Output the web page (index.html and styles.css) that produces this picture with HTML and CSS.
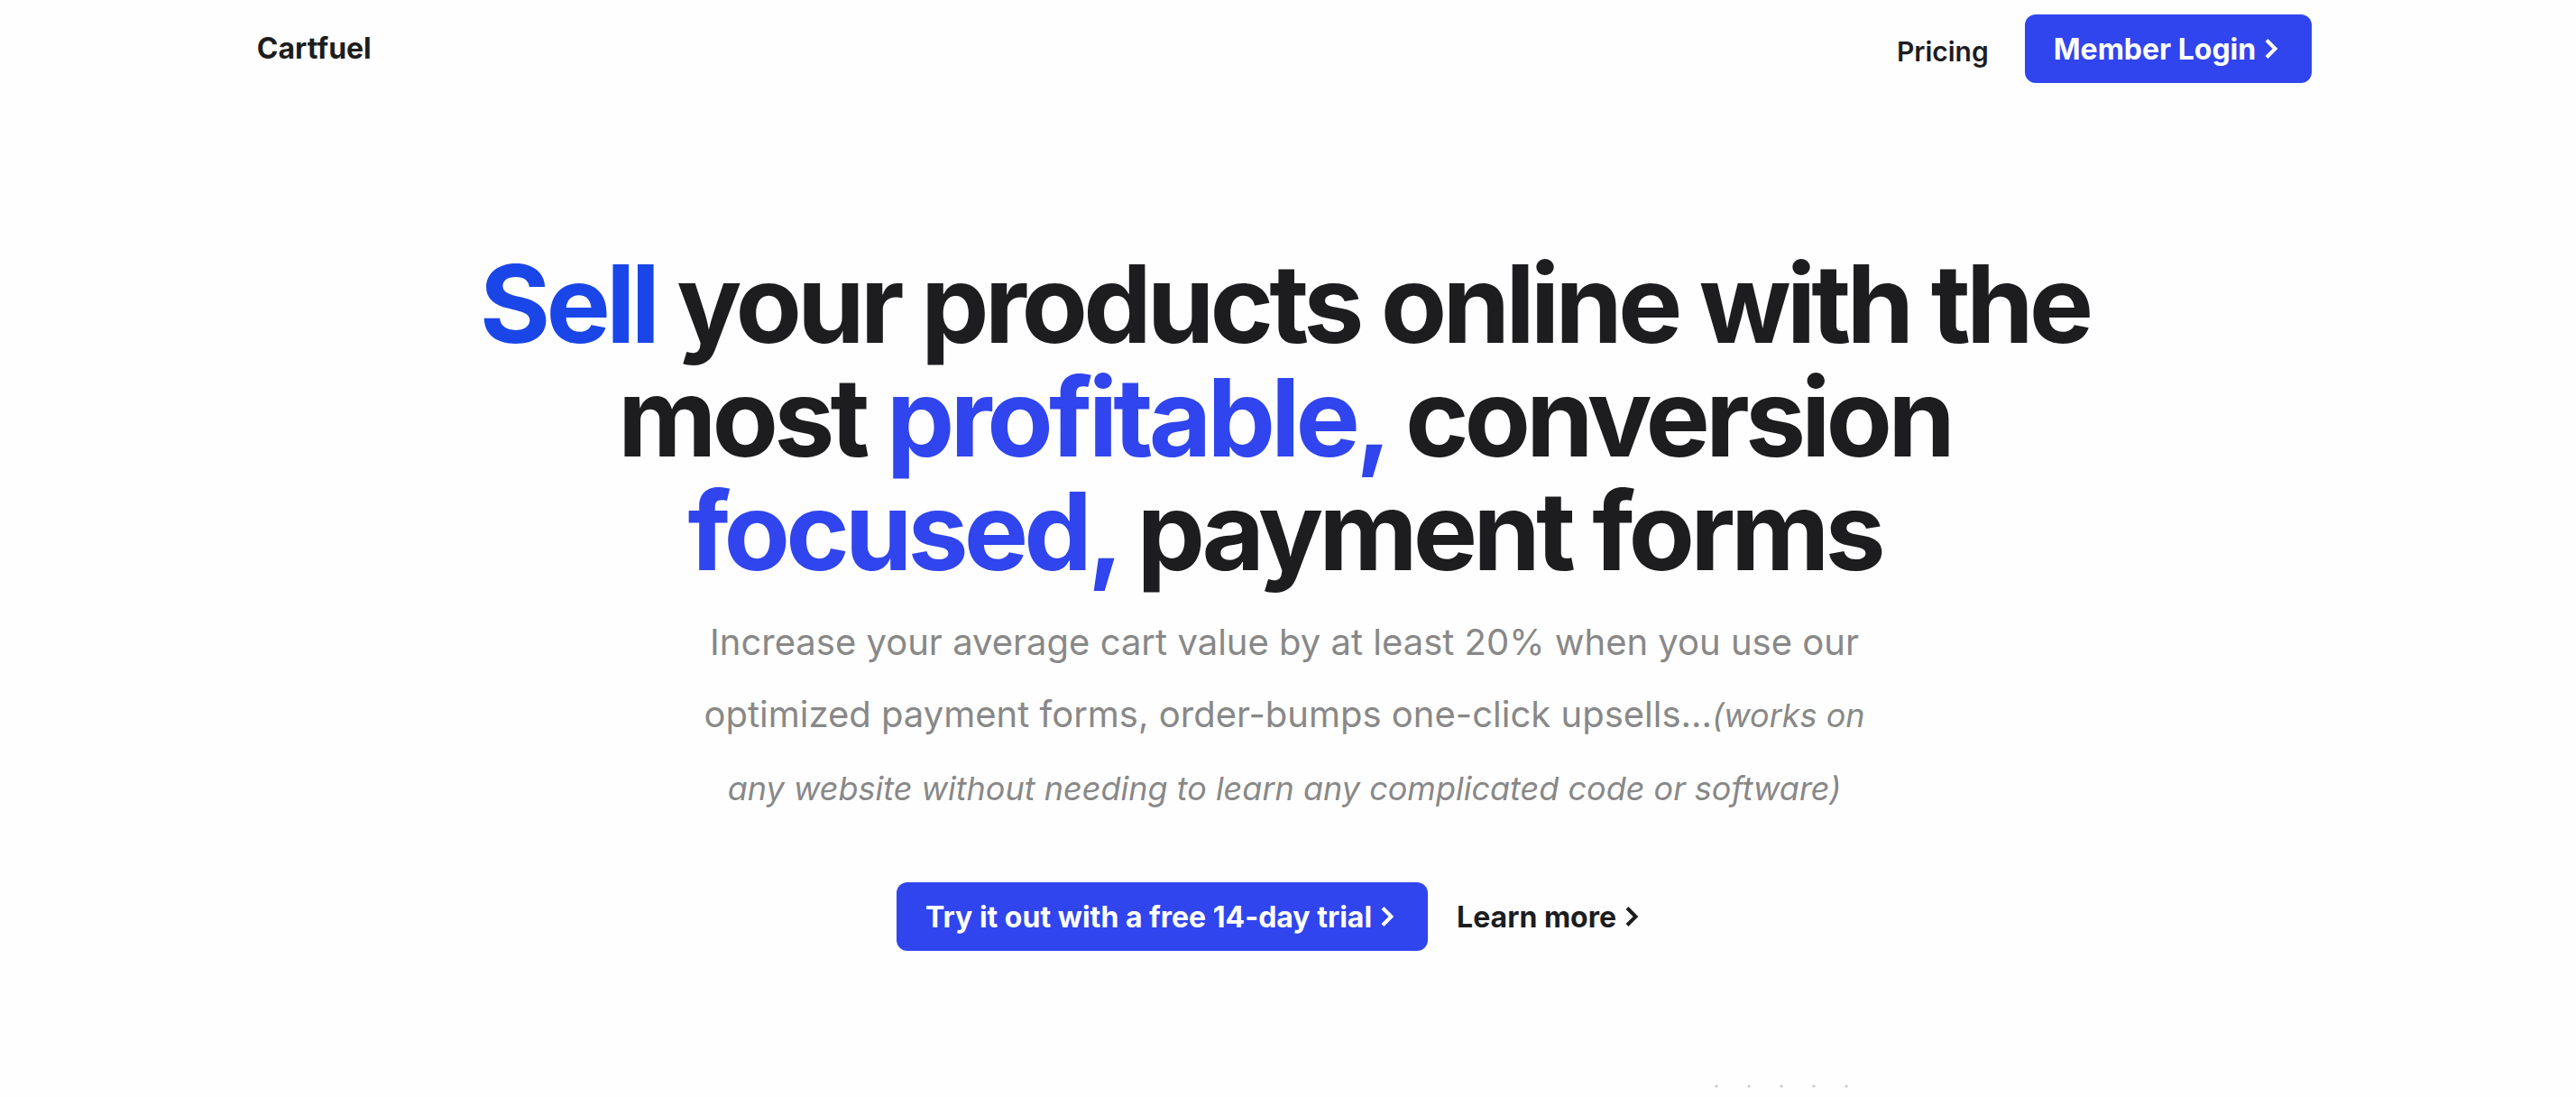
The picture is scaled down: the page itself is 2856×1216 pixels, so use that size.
FILE: index.html
```html
<!DOCTYPE html>
<html lang="en">
<head>
<meta charset="utf-8">
<meta name="viewport" content="width=device-width, initial-scale=1">
<title>Cartfuel</title>
<link rel="stylesheet" href="styles.css">
</head>

<body>
<header class="navbar">
  <a class="brand" href="#">Cartfuel</a>
  <nav class="nav-links">
    <a class="nav-link" href="#pricing">Pricing</a>
    <a class="btn" href="#login">Member Login
      <svg class="arrow" viewBox="0 0 16 24"><path d="M2 2.500l9.500 9.500-9.500 9.500"/></svg>
    </a>
  </nav>
</header>

<main>
  <section class="hero">
    <h1><span class="sell">Sell</span> your products online with the most <span class="blue">profitable,</span> conversion <span class="blue">focused,</span> payment forms</h1>
    <p class="lead">Increase your average cart value by at least 20% when you use our optimized payment forms, order-bumps one-click upsells...<em>(works on any website without needing to learn any complicated code or software)</em></p>
    <div class="actions">
      <a class="btn" href="#trial">Try it out with a free 14-day trial
        <svg class="arrow" viewBox="0 0 16 24"><path d="M2 2.500l9.500 9.500-9.500 9.500"/></svg>
      </a>
      <a class="more" href="#more">Learn more
        <svg class="arrow" viewBox="0 0 16 24"><path d="M2 2.500l9.500 9.500-9.500 9.500"/></svg>
      </a>
    </div>
  </section>

  <section class="preview">
    <div class="dots"></div>
  </section>
</main>
</body>
</html>
```
FILE: styles.css
```css
* {
  box-sizing: border-box;
}

body {
  margin: 0;
  padding-right: 8px;
  background: #fefefe;
  color: #1d1d1f;
  font-family: Inter, "Liberation Sans", sans-serif;
  font-size: 32px;
}

a {
  color: inherit;
  text-decoration: none;
}

/* navbar */
.navbar {
  display: flex;
  align-items: center;
  justify-content: space-between;
  padding: 16px 10% 0;
}

.brand {
  font-weight: 700;
  line-height: 40px;
}

.nav-links {
  display: flex;
  align-items: center;
  gap: 40px;
}

.nav-link {
  padding-top: 6px;
  font-size: 30px;
  font-weight: 600;
}

.btn,
.more {
  display: inline-flex;
  align-items: center;
  gap: 10px;
  height: 76px;
  padding-right: 36px;
  font-weight: 700;
  white-space: nowrap;
}

.btn {
  padding-left: 32px;
  border-radius: 12px;
  background: #3045ee;
  color: #fff;
}

.arrow {
  width: 16px;
  height: 24px;
  fill: none;
  stroke: currentColor;
  stroke-width: 4;
}

/* hero */
.hero {
  display: flex;
  flex-direction: column;
  align-items: center;
  padding-top: 182px;
  text-align: center;
}

h1 {
  max-width: 1840px;
  margin: 0;
  font-size: 120px;
  font-weight: 700;
  line-height: 126px;
  letter-spacing: -5px;
}

.sell {
  color: #1a46e8;
}

.blue {
  color: #3045ee;
}

.lead {
  max-width: 1320px;
  margin: 20px 0 0;
  color: #888;
  font-size: 40px;
  line-height: 80px;
}

.lead em {
  font-size: 36px;
}

.actions {
  display: flex;
  gap: 32px;
  margin-top: 64px;
}

/* dotted corner behind the form preview */
.preview {
  display: flex;
  justify-content: flex-end;
  padding: 132px 27.5% 0 0;
}

.dots {
  width: 180px;
  height: 32px;
  background: radial-gradient(circle, #ccc 1px, transparent 2px) 0 0 / 36px 36px;
}
```
